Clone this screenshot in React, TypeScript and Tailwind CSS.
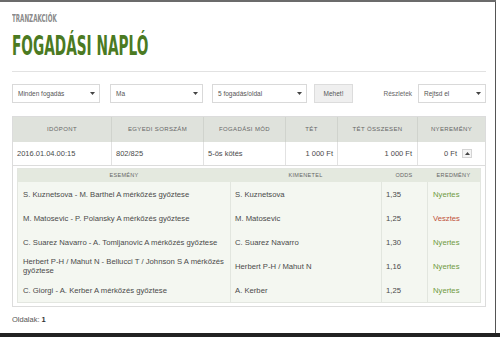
// ── Data ─────────────────────────────────────────────
const BET_COLUMNS = [
  { label: "Időpont", w: "w-[98px]" },
  { label: "Egyedi sorszám", w: "w-[92px]" },
  { label: "Fogadási mód", w: "w-[82px]" },
  { label: "Tét", w: "w-[52px]" },
  { label: "Tét összesen", w: "w-[80px]" },
  { label: "Nyeremény", w: "flex-1" },
];

const EVENTS = [
  {
    event: "S. Kuznetsova - M. Barthel A mérkőzés győztese",
    outcome: "S. Kuznetsova",
    odds: "1,35",
    won: true,
  },
  {
    event: "M. Matosevic - P. Polansky A mérkőzés győztese",
    outcome: "M. Matosevic",
    odds: "1,25",
    won: false,
  },
  {
    event: "C. Suarez Navarro - A. Tomljanovic A mérkőzés győztese",
    outcome: "C. Suarez Navarro",
    odds: "1,30",
    won: true,
  },
  {
    event: "Herbert P-H / Mahut N - Bellucci T / Johnson S A mérkőzés győztese",
    outcome: "Herbert P-H / Mahut N",
    odds: "1,16",
    won: true,
  },
  {
    event: "C. Giorgi - A. Kerber A mérkőzés győztese",
    outcome: "A. Kerber",
    odds: "1,25",
    won: true,
  },
];

// ── Small pieces ─────────────────────────────────────
function Caret() {
  return (
    <svg width="5" height="3" viewBox="0 0 5 3" className="shrink-0">
      <path d="M0 0h5L2.5 3z" fill="#444" />
    </svg>
  );
}

function Select({ label, className }: { label: string; className: string }) {
  return (
    <div
      className={`${className} h-[19px] flex items-center justify-between pl-[5px] pr-[4px] border border-[#d9d9d9] bg-white text-[6.5px] text-[#555]`}
    >
      <span>{label}</span>
      <Caret />
    </div>
  );
}

// ── Main component ───────────────────────────────────
export default function App() {
  return (
    <div className="w-[500px] h-[337px] bg-white flex flex-col font-['Liberation_Sans',Arial,sans-serif] text-[#4a4a4a] overflow-hidden">
      <div className="h-[2px] bg-[#6b6b6b] mr-[4px]" />

      <div className="flex-1 flex flex-col pl-[12px] pr-[9px] mr-[4px] border-r border-[#555]">
        {/* Heading */}
        <div className="mt-[11px] h-[12px] text-[10px] leading-[12px] font-bold text-[#8a8a8a] font-['DejaVu_Sans_Condensed',sans-serif] origin-left scale-x-[0.62] whitespace-nowrap">
          TRANZAKCIÓK
        </div>
        <h1 className="mt-[8px] h-[26px] text-[26px] leading-[26px] font-bold text-[#4b7a22] font-['DejaVu_Sans_Condensed',sans-serif] origin-left scale-x-[0.585] whitespace-nowrap">
          FOGADÁSI NAPLÓ
        </h1>
        <div className="mt-[12px] h-px bg-[#e2e2e2]" />

        {/* Filters */}
        <div className="mt-[12px] flex items-center">
          <Select label="Minden fogadás" className="w-[88px]" />
          <Select label="Ma" className="w-[93px] ml-[10px]" />
          <Select label="5 fogadás/oldal" className="w-[95px] ml-[9px]" />
          <div className="ml-[7px] w-[39px] h-[19px] flex items-center justify-center border border-[#dcdcdc] bg-[#efefef] text-[6.5px] text-[#555]">
            Mehet!
          </div>
          <span className="ml-auto mr-[6px] text-[6.5px] text-[#666]">Részletek</span>
          <Select label="Rejtsd el" className="w-[68px]" />
        </div>

        {/* Bet table */}
        <div className="mt-[13px] border border-[#dcdcdc]">
          <div className="flex h-[25px] bg-[#dfe2dc]">
            {BET_COLUMNS.map((col, i) => (
              <div
                key={col.label}
                className={`${col.w} flex items-center justify-center text-[6px] tracking-[0.06em] uppercase text-[#666] ${i > 0 ? "border-l border-[#d0d3cd]" : ""}`}
              >
                {col.label}
              </div>
            ))}
          </div>
          <div className="flex h-[23px] text-[7.5px] bg-white">
            <div className="w-[98px] flex items-center pl-[4px]">2016.01.04.00:15</div>
            <div className="w-[92px] flex items-center pl-[4px] border-l border-[#e2e2e2]">802/825</div>
            <div className="w-[82px] flex items-center pl-[4px] border-l border-[#e2e2e2]">5-ös kötés</div>
            <div className="w-[52px] flex items-center justify-end pr-[4px] border-l border-[#e2e2e2]">1 000 Ft</div>
            <div className="w-[80px] flex items-center justify-end pr-[5px] border-l border-[#e2e2e2]">1 000 Ft</div>
            <div className="flex-1 flex items-center justify-end pr-[13px] border-l border-[#e2e2e2]">
              <span>0 Ft</span>
              <span className="ml-[5px] w-[10px] h-[9px] flex items-center justify-center border border-[#d4d4d4] bg-[#f4f4f4]">
                <svg width="5" height="3" viewBox="0 0 5 3">
                  <path d="M0 3h5L2.5 0z" fill="#444" />
                </svg>
              </span>
            </div>
          </div>

          {/* Event details */}
          <div className="border-t border-[#dcdcdc] px-[4px] pt-[2px] pb-[3px]">
            <div className="border border-[#e3e6e0] bg-[#f4f7f1]">
              <div className="flex h-[13px] bg-[#e4e9df] text-[5.5px] tracking-[0.06em] uppercase text-[#666]">
                <div className="w-[212px] flex items-center justify-center">Esemény</div>
                <div className="w-[151px] flex items-center justify-center">Kimenetel</div>
                <div className="w-[46px] flex items-center justify-center">Odds</div>
                <div className="flex-1 flex items-center justify-center">Eredmény</div>
              </div>
              {EVENTS.map((row) => (
                <div key={row.event} className="flex h-[24px] text-[7.7px] leading-[9px]">
                  <div className="w-[212px] flex items-center pl-[5px] pr-[2px]">{row.event}</div>
                  <div className="w-[151px] flex items-center pl-[4px] border-l border-[#e2e6df]">{row.outcome}</div>
                  <div className="w-[46px] flex items-center pl-[4px] border-l border-[#e2e6df]">{row.odds}</div>
                  <div
                    className={`flex-1 flex items-center pl-[5px] border-l border-[#e2e6df] ${row.won ? "text-[#6f9a3e]" : "text-[#c0503a]"}`}
                  >
                    {row.won ? "Nyertes" : "Vesztes"}
                  </div>
                </div>
              ))}
            </div>
          </div>
        </div>

        {/* Pager */}
        <div className="mt-[7px] text-[7.5px] text-[#555]">
          Oldalak: <span className="font-bold text-[#333]">1</span>
        </div>
      </div>

      <div className="h-[4px] bg-[#222]" />
    </div>
  );
}
